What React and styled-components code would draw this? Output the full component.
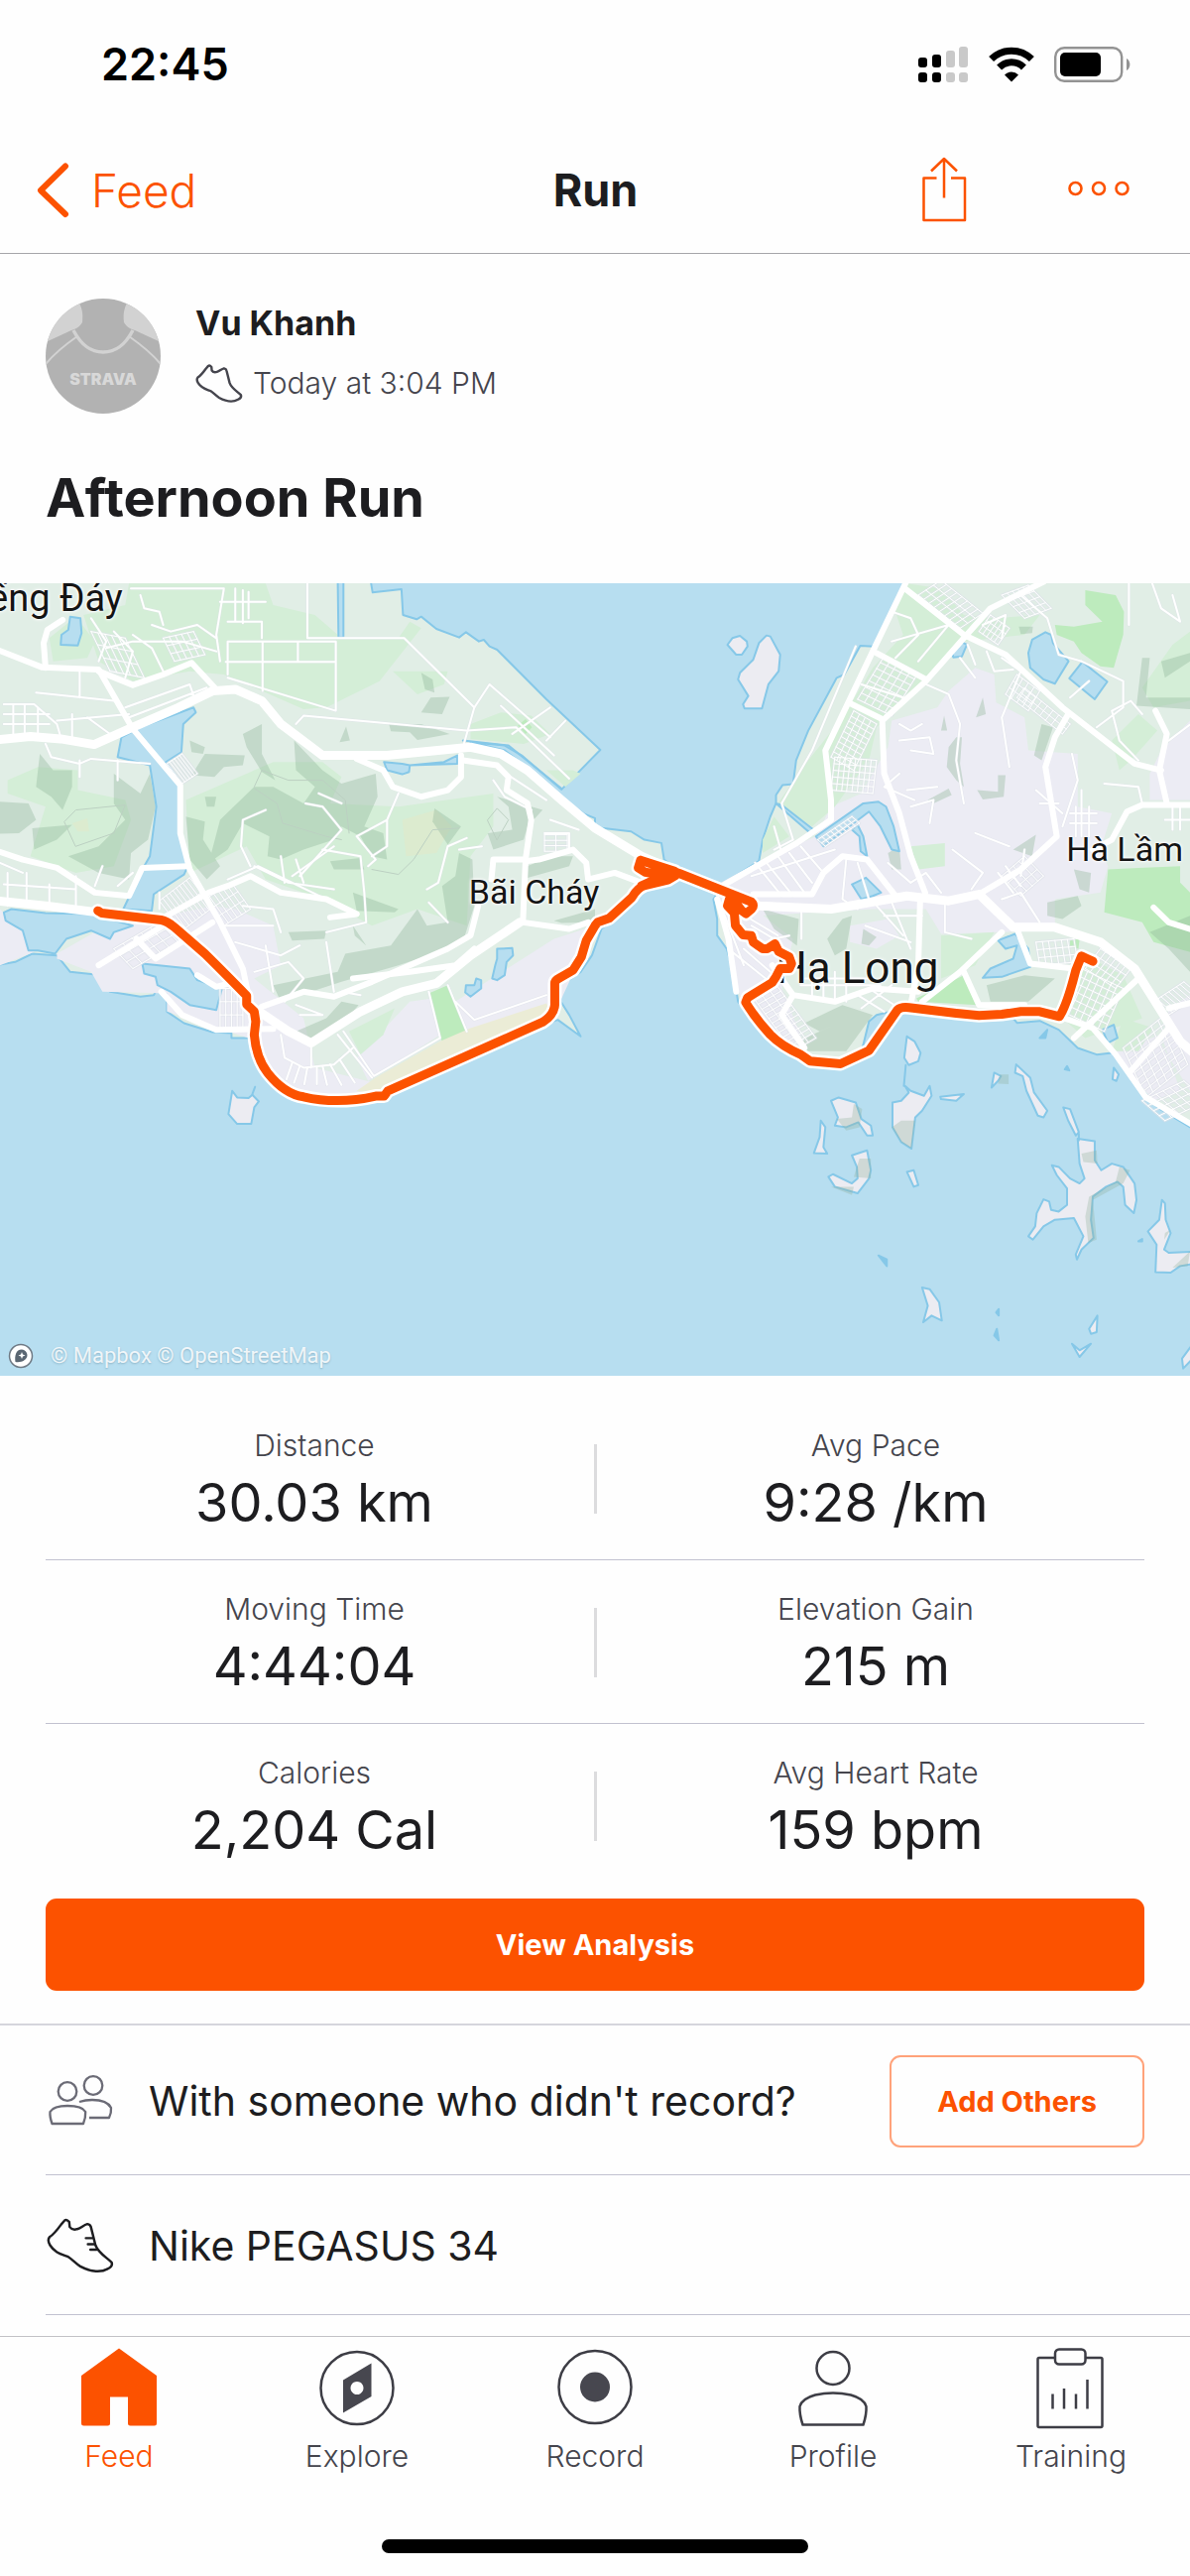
import React from "react";
import styled, { createGlobalStyle } from "styled-components";

const ORANGE = "#fc5200";
const INK = "#1d1d20";
const SLATE = "#45454d";
const RULE = "#c2c2d0";

const GlobalStyle = createGlobalStyle`
  *, *::before, *::after { box-sizing: border-box; }
  body {
    margin: 0;
    background: #fefefe;
    color: ${INK};
    font-family: Inter, "Liberation Sans", sans-serif;
  }
  h1, h2, p, dl, dt, dd, ul { margin: 0; padding: 0; }
  button { font-family: inherit; cursor: pointer; }
  a { color: inherit; text-decoration: none; }
  svg { display: block; }
`;

/* ---------- Status bar ---------- */

const StatusBar = styled.div`
  display: flex;
  align-items: center;
  justify-content: space-between;
  height: 130px;
  padding: 0 60px 0 102px;
`;

const Clock = styled.time`
  color: #000;
  font-size: 45px;
  font-weight: 600;
  line-height: 60px;
`;

const StatusIcons = styled.div`
  display: flex;
  align-items: center;
  gap: 20px;
`;

function Signal() {
  const bars = [
    [0, 11, "#000"],
    [14, 8, "#000"],
    [28, 4, "#c9c9c9"],
    [41, 0, "#c9c9c9"],
  ];
  return (
    <svg width="51" height="36" viewBox="0 0 51 36" aria-hidden="true">
      {bars.map(([x, y, fill]) => (
        <g key={x} fill={fill}>
          <rect x={x} y={y} width="9" height={21 - y} rx="3" />
          <rect x={x} y="26" width="9" height="10" rx="3" />
        </g>
      ))}
    </svg>
  );
}

function Wifi() {
  return (
    <svg width="46" height="36" viewBox="0 0 46 36" aria-hidden="true">
      <g fill="none" stroke="#000" strokeWidth="7">
        <path d="M2.600 12.600 A29 29 0 0 1 43.400 12.600" />
        <path d="M10.600 21 A17.500 17.500 0 0 1 35.400 21" />
      </g>
      <path d="M23 35.500 L16 28.400 A10 10 0 0 1 30 28.400 Z" fill="#000" />
    </svg>
  );
}

function Battery() {
  return (
    <svg width="77" height="36" viewBox="0 0 77 36" aria-hidden="true">
      <rect x="1.200" y="1.200" width="67" height="33.600" rx="9" fill="none" stroke="#939393" strokeWidth="2.400" />
      <rect x="6" y="6" width="41" height="24" rx="5" fill="#000" />
      <path d="M73 12 C77.500 14 77.500 22 73 24 Z" fill="#939393" />
    </svg>
  );
}

/* ---------- Navigation header ---------- */

const Header = styled.header`
  display: grid;
  grid-template-columns: 1fr auto 1fr;
  align-items: center;
  height: 126px;
  padding: 0 61px 2px 36px;
  border-bottom: 1px solid #a6a6aa;
`;

const BackLink = styled.a`
  display: flex;
  align-items: center;
  gap: 20px;
  color: ${ORANGE};
  font-size: 46px;
  font-weight: 300;
  line-height: 60px;
`;

const HeaderTitle = styled.h1`
  padding-left: 26px;
  font-size: 45px;
  font-weight: 700;
  line-height: 60px;
`;

const HeaderActions = styled.div`
  display: flex;
  align-items: center;
  justify-content: flex-end;
  gap: 102px;
`;

const IconButton = styled.button`
  padding: 0;
  border: 0;
  background: none;
`;

/* ---------- Athlete ---------- */

const Athlete = styled.section`
  display: flex;
  gap: 35px;
  padding: 45px 46px 0;
`;

const AthleteName = styled.p`
  font-size: 34px;
  font-weight: 700;
  line-height: 50px;
`;

const AthleteMeta = styled.p`
  display: flex;
  align-items: center;
  gap: 10px;
  margin-top: 10px;
  color: ${SLATE};
  font-size: 30px;
  font-weight: 300;
  line-height: 50px;
`;

const ActivityTitle = styled.h2`
  padding: 52px 46px 53px;
  font-size: 54px;
  font-weight: 700;
  line-height: 66px;
`;

function Avatar() {
  return (
    <svg width="116" height="116" viewBox="0 0 116 116" role="img" aria-label="Vu Khanh">
      <clipPath id="avatar-clip">
        <circle cx="58" cy="58" r="58" />
      </clipPath>
      <g clipPath="url(#avatar-clip)">
        <rect width="116" height="116" fill="#b2b2b2" />
        <g fill="#d2d2d2">
          <path d="M31 0 C37 8 38 15 37 24 C34 29 30 31 26 32 L0 44 V0 Z" />
          <path d="M85 0 C79 8 78 15 79 24 C82 29 86 31 90 32 L116 44 V0 Z" />
        </g>
        <g fill="none" stroke="#d2d2d2">
          <path d="M28 32 C36 47 45 54 58 54 C71 54 80 47 88 32" strokeWidth="3.500" />
          <path d="M32 38 C22 45 10 54 0 66 M84 38 C94 45 106 54 116 66" strokeWidth="2" />
        </g>
        <text x="58" y="87" textAnchor="middle" fontFamily="Inter, sans-serif" fontWeight="900" fontSize="16" fill="#d8d8d8">
          STRAVA
        </text>
      </g>
    </svg>
  );
}

const SHOE =
  "M17 6.500 L20.500 2.500 Q22.500 1 25 4 L25.500 9 Q28 12.500 33 11 C37 10 39 7 43 6 Q46 6.500 46.500 9 L51 27 C54 35 62 39 67 44 Q68.500 48 63 50.500 C57 54 47 54 36 48 C31 45 28 41 24 38.500 C18 36 11 35 6 27 Q3 22 5.500 19 C10 16 13 12 17 6.500 Z";

function Shoe({ width, height, color, stroke, laces }) {
  return (
    <svg width={width} height={height} viewBox="2 0 68 55" fill="none" stroke={color} strokeWidth={stroke} strokeLinejoin="round" strokeLinecap="round" aria-hidden="true">
      <path d={SHOE} />
      {laces && <path d="M41.500 20 H48 M43.500 26 H50 M46 31.500 H52" />}
    </svg>
  );
}

/* ---------- Map ---------- */

const MapFrame = styled.figure`
  position: relative;
  margin: 0;
  overflow: hidden;
  aspect-ratio: 1200 / 799;
  background: #b7def0;
`;

const MapLayer = styled.svg`
  position: absolute;
  inset: 0;
  width: 100%;
  height: 100%;
  path { vector-effect: non-scaling-stroke; }
`;

const PlaceLabel = styled.span`
  position: absolute;
  left: ${(p) => p.$x}%;
  top: ${(p) => p.$y}%;
  color: #141414;
  font-family: Roboto, "Noto Sans", sans-serif;
  font-size: ${(p) => p.$size}px;
  line-height: 40px;
  white-space: nowrap;
  text-shadow: 0 0 2px #fff, 0 0 3px #fff, 0 0 4px #fff;
`;

const Attribution = styled.figcaption`
  position: absolute;
  left: 8px;
  bottom: 6px;
  display: flex;
  align-items: center;
  gap: 17px;
  color: rgba(255, 255, 255, 0.85);
  font-family: Roboto, sans-serif;
  font-size: 22px;
  line-height: 28px;
  text-shadow: 0 1px 2px rgba(80, 120, 140, 0.4);
`;

const WEST =
  "M-20 0 H976 L978 25 L982 52 L1058 42 L1062 120 L1098 133 L1110 125 L1150 162 L1210 188 L1228 172 L1262 200 L1275 195 L1290 215 L1310 225 L1440 375 L1582 528 L1480 648 L1375 545 L1330 515 L1240 505 L1330 530 L1400 590 L1500 690 L1540 722 L1568 735 L1568 762 L1663 775 L1698 800 L1743 810 L1750 860 L1790 895 L1760 925 L1700 950 L1640 1020 L1585 1070 L1560 1150 L1530 1200 L1480 1240 L1478 1290 L1500 1330 L1530 1395 L1470 1345 L1430 1360 L1010 1580 L890 1595 L770 1575 L700 1500 L655 1400 L610 1400 L610 1385 L560 1382 L485 1355 L440 1320 L440 1265 L415 1250 L405 1270 L370 1275 L290 1260 L270 1210 L185 1200 L150 1150 L85 1145 L40 1170 L-20 1182 Z";

const EAST =
  "M2392 0 L2388 25 L2303 215 L2267 213 L2225 300 L2205 310 L2130 470 L2098 560 L2090 632 L2062 635 L2045 665 L2045 690 L2030 730 L2010 800 L2000 865 L1910 930 L1880 980 L1890 1040 L1890 1090 L1915 1130 L1933 1200 L1945 1290 L2000 1370 L2060 1440 L2130 1475 L2215 1485 L2265 1450 L2275 1420 L2290 1350 L2310 1330 L2340 1322 L2375 1310 L2450 1325 L2560 1342 L2670 1340 L2680 1354 L2740 1348 L2790 1375 L2840 1430 L2890 1450 L2930 1445 L2990 1530 L3050 1610 L3160 1686 V0 Z";

const URBAN = [
  "M2570 280 L2620 300 L2625 385 L2700 430 L2710 530 L2840 540 L2840 700 L2930 720 L2900 830 L2920 880 L2900 960 L2780 980 L2780 1075 L2480 1085 L2440 1010 L2300 1010 L2000 1030 L1900 930 L2010 860 L2150 790 L2190 700 L2270 660 L2340 520 L2350 440 L2470 400 L2500 350 Z",
  "M3030 600 L3060 530 L3136 440 V680 H3030 Z",
  "M1885 960 L1990 1010 L2090 1100 L2060 1250 L2120 1420 L2060 1440 L1960 1310 L1920 1150 Z",
  "M2240 1060 L2340 1040 L2370 1090 L2310 1130 L2240 1110 Z",
  "M2380 130 L2430 120 L2445 150 L2430 200 L2380 210 Z",
  "M3136 1270 L3080 1310 L3060 1420 L3136 1560 Z M2930 1440 L3060 1390 L3110 1560 L3040 1590 Z",
  "M150 1145 L250 1080 L440 1030 L560 1000 L620 1010 L720 1060 L740 1180 L670 1220 L800 1340 L830 1490 L1000 1540 L980 1580 L890 1595 L770 1575 L655 1400 L440 1320 L440 1265 L270 1260 L240 1200 L150 1160 Z",
  "M0 1010 L60 1075 L90 1140 L0 1180 Z",
  "M940 1460 L1080 1290 L1140 1280 L1160 1390 L970 1530 Z M1200 1290 L1460 1100 L1568 1060 L1460 1330 L1220 1385 Z",
];

const MEADOW = [
  "M340 25 H700 L720 90 L830 120 L900 190 L1050 190 L1080 140 L1110 160 L1000 320 L860 400 L800 405 L690 350 L590 300 L500 290 L350 320 L260 260 L220 120 L330 90 Z",
  "M130 190 L200 125 L250 200 L230 250 L140 260 Z",
  "M20 620 L100 580 L205 590 L205 650 L330 680 L345 740 L300 880 L200 900 L80 850 L120 700 L20 660 Z",
  "M490 680 L720 565 L850 565 L900 610 L870 690 L1050 700 L1300 660 L1300 760 L1240 850 L1230 1060 L1100 1010 L980 1060 L850 980 L700 920 L650 820 L500 900 Z",
  "M1035 290 L1180 290 L1170 330 L1100 360 Z",
  "M1240 450 L1320 415 L1400 425 L1450 480 L1380 510 L1240 495 Z",
  "M1440 590 L1510 590 L1530 600 L1490 640 Z",
  "M2388 25 L2480 40 L2540 120 L2620 130 L2740 120 L2700 180 L2620 190 L2540 200 L2480 260 L2400 370 L2310 460 L2290 560 L2200 700 L2140 760 L2050 690 L2130 560 L2220 430 L2300 280 L2380 180 L2360 110 Z",
  "M2010 800 L2040 730 L2080 790 L2010 840 Z",
  "M2930 500 L3000 420 L3050 470 L2980 560 L2950 590 Z",
  "M3010 340 L3090 210 L3136 170 V380 L3040 400 Z",
  "M2400 820 L2490 810 L2490 880 L2420 890 Z",
  "M2480 1090 L2620 1080 L2570 1180 L2480 1220 Z M2860 1150 L2960 1210 L3010 1340 L2860 1400 L2790 1330 Z",
  "M2960 1340 L3040 1370 L3000 1440 L2930 1440 Z",
  "M920 1380 L1040 1310 L1010 1390 L950 1450 Z",
];

const FOREST = [
  "M2860 45 L2940 60 L2962 110 L2960 180 L2935 280 L2900 275 L2850 235 L2830 200 L2785 180 L2780 150 L2830 155 L2905 140 L2860 90 Z",
  "M2920 890 L3000 885 L3110 880 L3110 930 L3136 960 V1140 L3040 1110 L3010 1050 L2910 1020 Z",
  "M2415 1280 L2540 1210 L2575 1300 L2420 1290 Z",
  "M1130 1265 L1180 1240 L1228 1380 L1165 1412 Z",
  "M1365 455 L1385 435 L1402 460 L1385 480 Z",
  "M2820 1105 L2845 1100 L2842 1130 L2820 1125 Z",
];

const SAND = [
  "M940 1560 L990 1520 L1160 1410 L1240 1370 L1440 1295 L1455 1330 L1430 1355 L1010 1575 Z",
];

const FAINT_SAND = [
  "M1060 740 L1150 710 L1190 760 L1150 840 L1070 850 Z",
  "M190 750 L230 735 L235 775 L205 775 Z",
];

const SHADE = [
  "M105 540 L140 590 L190 590 L190 640 L165 710 L135 670 L95 640 Z",
  "M0 685 L75 690 L95 740 L50 780 L0 782 Z",
  "M300 600 L370 660 L395 600 L410 700 L390 800 L345 840 L340 920 L260 900 L180 850 L260 820 L330 740 L300 690 Z",
  "M85 765 L190 755 L150 800 L90 830 Z",
  "M640 480 L690 450 L690 540 L725 620 L690 595 L650 520 Z",
  "M500 500 L540 520 L535 540 L505 535 Z",
  "M540 540 L645 545 L640 575 L590 580 L565 610 L505 605 Z",
  "M540 670 L570 670 L565 700 L545 700 Z",
  "M775 500 L850 590 L900 630 L960 610 L990 600 L995 670 L960 760 L1010 780 L1020 860 L980 850 L950 790 L900 760 L880 800 L800 830 L740 860 L705 850 L710 790 L640 750 L600 830 L550 870 L580 740 L670 640 L720 640 L800 690 L830 640 L780 590 Z",
  "M490 730 L540 745 L535 800 L580 880 L545 920 L500 860 Z",
  "M870 865 L950 855 L960 890 L880 890 Z",
  "M1110 295 L1140 315 L1145 355 L1120 345 Z M1110 415 L1135 370 L1185 368 L1165 420 Z",
  "M1145 705 L1215 760 L1180 815 L1140 745 Z",
  "M1025 450 L1110 450 L1185 480 L1100 498 L1080 475 L1030 472 Z",
  "M895 505 L912 458 L922 500 Z",
  "M930 960 L1050 1010 L1040 1020 L940 1015 Z",
  "M1210 840 L1245 860 L1250 1000 L1225 1090 L1180 1130 L1050 1180 L900 1230 L740 1290 L720 1240 L890 1200 L910 1145 L1030 1120 L1100 1010 L1125 1060 L1180 1050 L1165 940 L1200 910 Z",
  "M1310 670 L1430 710 L1390 760 L1380 800 L1300 830 L1285 780 L1350 770 L1340 700 Z",
  "M1390 880 L1450 850 L1510 850 L1500 880 L1390 915 Z M1460 1045 L1568 1010 V1050 L1480 1052 Z",
  "M760 1080 L860 1075 L855 1100 L770 1105 Z M930 1060 L965 1120 L935 1090 Z",
  "M780 1380 L860 1340 L900 1290 L945 1300 L900 1360 L820 1410 Z",
  "M2520 490 L2535 490 L2530 570 L2540 640 L2520 620 L2495 580 L2500 520 Z",
  "M2590 370 L2598 420 L2572 430 Z M2488 425 L2496 470 L2480 470 Z M2445 680 L2500 645 L2508 665 L2460 690 Z",
  "M2575 650 L2630 655 L2630 605 L2650 605 L2645 670 L2590 678 Z",
  "M2745 450 L2775 460 L2745 560 L2725 545 Z M2685 155 L2722 155 L2720 175 L2690 178 Z",
  "M3010 250 L3030 250 L3020 370 L3136 370 V405 L2995 395 Z M3060 260 L3136 235 V260 L3070 310 Z",
  "M2670 830 L2730 785 L2720 850 Z M2830 890 L2875 900 L2870 960 L2845 950 Z",
  "M2340 840 L2370 820 L2375 890 L2350 890 Z",
  "M2010 1010 L2105 1040 L2100 1120 L2040 1070 Z M2220 1040 L2245 1030 L2230 1130 L2200 1150 L2180 1100 Z",
  "M2275 1070 L2310 1095 L2290 1120 L2270 1115 Z",
  "M2760 990 L2840 970 L2850 1000 L2800 1040 L2760 1030 Z M3030 1080 L3136 1030 V1200 L3080 1130 Z",
  "M2110 1440 L2230 1440 L2300 1330 L2220 1300 L2120 1355 L2160 1380 L2200 1360 L2120 1400 Z",
  "M2600 1240 L2700 1210 L2780 1220 L2710 1290 L2610 1290 Z",
];

const WATER = [
  "M510 400 L516 415 L483 450 L478 535 L437 565 L475 625 L475 760 L495 880 L485 905 L405 965 L400 1015 L325 1010 L375 890 L395 850 L412 700 L395 575 L310 550 L320 490 L370 460 Z",
  "M10 1020 L30 1010 L120 1022 L240 1025 L350 1060 L300 1080 L290 1100 L240 1075 L175 1100 L145 1145 L100 1135 L75 1135 L60 1075 L15 1045 Z",
  "M375 1175 L500 1190 L520 1225 L585 1250 L570 1315 L500 1300 L450 1260 L415 1240 L410 1215 L380 1205 Z",
  "M185 125 L212 130 L215 175 L205 212 L160 210 L162 180 L180 165 Z",
  "M890 10 H905 V188 H892 Z",
  "M1012 565 L1060 570 L1080 575 L1170 565 L1205 545 L1205 570 L1080 575 L1078 595 L1060 602 L1020 590 Z",
  "M1310 1130 L1350 1128 L1352 1150 L1335 1170 L1330 1210 L1310 1225 L1297 1220 L1305 1180 L1310 1160 Z",
  "M1228 1240 L1250 1240 L1255 1220 L1268 1225 L1268 1250 L1240 1275 L1226 1262 Z",
  "M2755 172 L2770 180 L2775 205 L2816 260 L2780 328 L2750 315 L2715 280 L2710 235 L2720 195 Z",
  "M2852 262 L2918 322 L2885 375 L2818 312 Z",
  "M2530 200 L2548 210 L2535 245 L2512 248 L2510 235 Z",
  "M2045 690 L2060 695 L2150 775 L2140 785 Z",
  "M2275 690 L2315 685 L2335 700 L2355 760 L2370 835 L2350 830 L2320 760 L2290 715 L2170 820 L2150 790 Z",
  "M2260 755 L2275 790 L2285 850 L2268 835 L2265 790 L2245 770 Z",
  "M2245 935 L2282 915 L2322 960 L2300 970 L2270 980 Z",
  "M2630 1105 L2675 1085 L2710 1130 L2715 1185 L2640 1215 L2590 1218 L2610 1190 L2670 1160 L2680 1120 L2650 1130 Z",
  "M2905 1375 L2935 1360 L2945 1400 L2920 1415 Z",
];

const ISLANDS = [
  "M1917 210 L1930 190 L1950 183 L1968 200 L1970 215 L1955 240 L1940 240 Z",
  "M2020 182 L2030 185 L2056 240 L2052 290 L2025 330 L2008 403 L1962 403 L1958 390 L1972 365 L1945 315 L1950 295 L1985 255 L2000 205 Z",
  "M612 1560 L625 1580 L655 1582 L665 1572 L682 1592 L670 1610 L662 1660 L625 1660 L602 1630 Z",
  "M2390 1395 L2410 1410 L2426 1445 L2420 1470 L2395 1482 L2383 1460 Z",
  "M2385 1545 L2400 1560 L2435 1575 L2450 1545 L2455 1575 L2430 1620 L2412 1640 L2402 1735 L2375 1715 L2352 1670 V1595 L2375 1590 L2395 1565 Z",
  "M2190 1590 L2210 1580 L2255 1595 L2270 1645 L2295 1665 L2300 1695 L2285 1695 L2262 1655 L2230 1670 L2200 1665 L2208 1640 Z",
  "M2163 1650 L2175 1670 L2170 1730 L2180 1750 L2145 1748 L2160 1700 Z",
  "M2245 1755 L2285 1740 L2295 1800 L2290 1825 L2260 1870 L2200 1850 L2183 1820 L2195 1812 L2245 1840 L2260 1825 L2258 1790 Z",
  "M2390 1805 L2408 1800 L2420 1845 L2408 1850 Z",
  "M2478 1578 L2540 1570 L2520 1590 L2480 1585 Z",
  "M2678 1480 L2715 1520 L2725 1565 L2760 1620 L2750 1640 L2735 1635 L2705 1560 L2695 1515 L2675 1505 Z",
  "M2613 1550 L2620 1505 L2638 1515 L2630 1530 Z",
  "M2802 1610 L2820 1615 L2843 1685 L2835 1695 L2815 1650 Z",
  "M2840 1705 L2885 1712 L2885 1770 L2902 1800 L2930 1780 L2960 1790 L2990 1840 L2995 1890 L2988 1930 L2965 1905 L2960 1850 L2945 1835 L2915 1850 L2880 1880 L2875 1950 L2882 2005 L2850 2040 L2838 2070 L2835 2055 L2855 2000 L2830 1945 L2780 1950 L2750 1970 L2722 2010 L2710 2000 L2728 1970 L2732 1930 L2750 1888 L2765 1895 L2770 1920 L2790 1925 L2812 1905 L2812 1855 L2785 1815 L2772 1785 L2790 1790 L2820 1825 L2845 1840 L2858 1825 L2845 1780 Z",
  "M3062 1890 L3070 1900 L3072 1950 L3085 1990 L3068 2040 L3080 2050 L3160 2045 V2080 L3136 2085 L3110 2090 L3085 2110 L3045 2108 L3048 2025 L3025 1985 L3055 1950 Z",
  "M2430 2155 L2450 2160 L2475 2200 L2482 2255 L2455 2240 L2433 2260 L2445 2210 Z",
  "M2892 2240 L2890 2290 L2875 2295 L2870 2280 Z M2825 2325 L2845 2345 L2875 2325 L2845 2365 Z",
  "M3160 2300 L3115 2370 L3118 2400 L3160 2350 Z",
  "M2935 1490 L2948 1510 L2942 1530 L2932 1525 Z",
];

const ISLAND_SHADE = [
  "M2350 1670 L2375 1650 L2412 1650 L2402 1735 L2375 1715 Z",
  "M2205 1645 L2245 1640 L2250 1600 L2272 1615 L2265 1670 L2230 1680 Z",
  "M2265 1765 L2295 1765 L2295 1825 L2250 1820 Z M2190 1850 L2250 1850 L2245 1875 Z",
  "M2850 1750 L2890 1740 L2892 1780 L2855 1775 Z",
  "M2870 1880 L2860 1940 L2868 2020 L2890 2010 L2880 1890 L2960 1840 L2978 1800 L2950 1790 L2940 1835 Z",
  "M3070 1990 L3085 1980 L3068 2010 Z M3090 2095 L3136 2045 L3130 2090 Z",
  "M2635 1510 L2658 1510 V1540 L2630 1538 Z",
];

const ISLETS = [
  "M2315 2058 L2337 2070 V2090 Z",
  "M2625 2230 L2632 2220 V2240 Z M2620 2300 L2627 2280 L2632 2315 Z",
  "M2740 1400 L2760 1375 L2755 1400 Z M2806 1495 L2812 1485 L2818 1498 Z M3000 2015 L3010 2008 V2015 Z",
];

const MOTORWAYS = [
  "M-10 498 L80 488 L160 495 L248 512 L340 465 L470 400 L560 350 L620 345 L690 380 L740 450 L850 545 L1020 545 L1240 520 L1320 540 L1390 590 L1480 680 L1568 765 L1690 850 L1790 900 L1900 960 L2000 1000 L2190 1010 L2390 970 L2500 985 L2580 965 L2670 1065 L2780 1065 L2900 1110 L2990 1190 L3050 1300 L3110 1410 L3150 1450",
  "M-10 985 L120 1000 L260 1020",
  "M670 1310 L760 1380 L820 1415 L950 1320 L1060 1260 L1150 1235 L1240 1150 L1370 1050",
];

const MAJOR_ROADS = [
  "M-10 224 L110 278 L260 285 L350 465 L475 635 L475 780 L500 890 L545 980 L580 1050 L640 1190 L660 1300",
  "M165 135 L125 165 L115 205 L120 280",
  "M260 290 L350 332 L430 300 L505 265 L570 345",
  "M-10 833 L60 860 L150 885 L250 960 L340 970 L375 885 L495 880",
  "M440 1030 L550 960 L600 940 L660 910 L740 960 L860 980 L940 1025 L870 1035",
  "M940 555 L1010 590 L1035 640 L1110 670 L1180 650 L1215 610 L1215 545",
  "M1220 560 L1310 575 L1340 610 L1335 650 L1390 690 L1400 740 L1385 860 L1300 860 L1295 920",
  "M1385 865 L1420 860 L1510 830 L1545 870 L1550 920 L1620 900 L1690 930",
  "M1385 860 L1378 1050 L1500 1070 L1550 1050",
  "M1260 1000 L1240 1090 L1180 1130 L980 1230 L880 1275 L800 1260 L690 1305",
  "M930 1220 L1080 1200 L1200 1180 L1250 1130",
  "M260 1180 L430 1060 M360 1100 L410 1160 L560 1050",
  "M425 1260 L480 1330 L570 1375 L720 1372",
  "M520 1210 L570 1245 L620 1230",
  "M2388 20 L2300 230 L2175 530 L2190 680 L2190 740 L2100 810 L1910 935",
  "M2385 40 L2540 180 L2650 240 L2800 400 L2990 570 L3060 590",
  "M2750 20 L2610 100 L2540 190 L2440 320 L2325 440 L2330 600 L2370 720 L2400 850 L2438 960",
  "M2310 235 L2440 315 M2245 390 L2325 435",
  "M2815 420 L2780 490 L2755 580 L2785 790 L2690 890 L2580 965",
  "M3045 410 L3075 480 L3055 590 L3075 690",
  "M3150 695 H3010 L2970 715 L2930 800 L2880 830",
  "M1985 965 L2140 965 L2170 900 L2220 850 L2285 860 L2360 970",
  "M2425 975 L2420 1180 L2400 1300",
  "M2640 1080 L2530 1200 L2430 1290 M2680 1070 L2715 1175 L2830 1190",
  "M1890 980 L1920 1100 L1940 1260",
  "M2035 1180 L2090 1270 L2060 1330 L2120 1430 M2090 1270 L2200 1290 L2300 1250 L2420 1260",
  "M2540 1200 L2580 1300 L2700 1300",
  "M2830 1400 L3000 1220 M2780 1330 L2880 1370 L2940 1450 L3020 1580 L3150 1668 M2980 1500 L3080 1370",
  "M3040 1005 L3080 1050 L3150 1075",
  "M3080 1310 L3150 1290",
];

const MINOR_ROADS = [
  "M345 40 H590 L570 180 L580 260 M370 60 L380 100 L420 110 L430 150 M240 130 L280 200 L260 260 M300 170 L350 230 L330 310 M400 150 L450 170 L520 150 L570 190 M350 180 L400 220 L430 290 M280 220 L350 200 L480 200 L570 230",
  "M600 200 H885 M595 262 H885 M692 200 V350 M785 200 V262 M885 200 V410 L600 310 M600 200 V300 M810 20 V190 H1065 L1250 400 L1220 520",
  "M580 80 H700 M620 40 V140 M640 45 V145 M655 50 V130 M600 140 H690 V190",
  "M95 355 L300 380 M210 290 V370 M330 400 L500 330 L515 380 M340 430 L545 340 M150 440 L340 420 M190 420 V500 M10 390 H90 L150 450 L160 490 M10 420 H130 M10 450 H130 M35 390 V485 M65 390 V485 M100 400 V485 M230 430 L290 480",
  "M800 425 L1230 470 L1360 460 M780 450 L800 425 M1250 400 L1290 330 L1450 490 M1360 460 L1500 615 M1450 400 L1350 480 M1490 440 L1440 500 M1320 395 L1460 545",
  "M120 510 L135 550 L210 570 L240 555 L395 570 M210 560 V610 M310 560 V620",
  "M700 710 L640 740 L635 820 L660 880 M805 690 L850 700 L900 770 L790 910 M840 660 L900 690 M1050 660 L1020 740 L940 790 L990 860 L970 880 M1020 740 V820 L980 850",
  "M670 880 L760 930 L880 950 M600 920 L680 880 L860 980 M740 850 L750 930 M780 860 L800 930 M850 830 L950 850 L960 960 L965 1050 L860 1080 M770 910 L880 820",
  "M1125 950 L1155 930 L1180 820 L1230 795 M1210 830 L1270 820 M1300 620 L1330 670 L1400 710 M1320 590 L1440 680 M1435 780 H1500 V830 M1450 740 L1525 770",
  "M0 870 L60 900 M10 935 L200 950 M20 900 V1000 M70 900 V1000 M130 935 V1000 M200 910 V1015 M270 880 L250 940 M310 940 L350 900",
  "M420 960 V1010 M740 1080 L720 1010 L640 1000 M590 1060 H720 M620 1110 L740 1150 L790 1120 M670 1200 L760 1170 L800 1220 L750 1290 M700 1120 L720 1260 M860 1110 L880 1260 M1180 1050 L1130 990",
  "M780 1300 L850 1330 L790 1330 M900 1260 L950 1270 M820 1420 V1490 M740 1390 L750 1460 L800 1490 L880 1480 L930 1430 M890 1390 L980 1520 M905 1380 L985 1515 L1160 1400 L1130 1260 M1200 1290 L1250 1345 L1440 1270 M1180 1240 L1230 1380",
  "M770 1475 L755 1525 M790 1485 L775 1535 M810 1490 L802 1540 M835 1490 V1540 M850 1485 L862 1542 M870 1480 L900 1542 M895 1465 L935 1535",
  "M2255 215 L2140 530 L2060 690 L2090 800 L2040 830 M2350 110 L2400 130 L2420 180 L2360 250 M2350 200 L2500 150 L2420 260 M2270 330 L2380 370",
  "M2440 330 L2500 360 L2530 450 L2520 560 L2540 690 M2370 450 L2400 470 L2430 450 M2370 500 L2450 490 L2460 540 L2400 530 M2640 250 L2690 290 L2640 430 L2660 580 M2390 650 L2470 640 M2400 700 L2460 680 L2450 750 M2370 600 L2330 640 L2410 680",
  "M2690 60 L2760 130 L2790 240 L2850 260 M2550 210 L2570 270 M2600 230 L2620 290 L2670 285 M2530 250 L2570 310 M2590 150 L2650 120 L2640 190",
  "M2975 20 V150 M3035 20 L3060 100 L3110 140 L3090 60 M2930 410 L2950 500 L3000 560 M2930 410 L2980 380 L3010 420 M2850 260 L2960 320 V400 L2890 460 M2820 370 L2870 320",
  "M2850 650 V790 M2730 650 L2800 720 M2740 690 H2790 M2700 830 L2690 910 M2650 880 L2690 940 M2630 900 L2670 960 M2570 780 L2660 820 M2510 830 L2590 900 L2560 950 M2825 540 L2840 620 L2800 760",
  "M2910 630 L3000 640 L3010 690 M3150 440 L3080 500 M2820 720 H2890 M2820 750 H2890 M2835 700 V790 M2870 700 V790 M3070 740 H3150 M3090 700 V770 M3110 700 V770",
  "M1990 870 L2060 970 M2020 870 L2090 970 M2050 850 L2120 960 M2080 840 L2140 930 M2110 820 L2170 900 M2040 760 L2060 840 M1980 910 L2200 830",
  "M2230 860 L2220 980 L2260 1010 M2260 870 L2290 980 M2340 870 L2400 930 L2440 900 L2480 960 M2310 1000 L2380 1090 M2350 990 L2400 1130 M2330 1030 H2430 M2280 1060 L2400 1110 M2490 990 V1080 L2560 1100 M2640 980 L2690 960 L2740 1050",
  "M1900 1000 L1960 1180 M1920 1000 L2050 1090 M1930 1140 L2040 1240 M1960 1130 L2060 1230 M1980 1060 L2040 1100 L2080 1090 M2112 1010 V1100",
  "M2120 1220 H2300 M2110 1240 H2320 M2140 1190 V1280 M2170 1190 V1290 M2200 1200 V1290 M2230 1200 V1290 M2260 1270 L2330 1320 M2290 1250 L2370 1310 M2350 1240 L2270 1310",
];

// Parallel streets filling a quarter: origin, two spanning vectors, and a count along each.
function streetGrid([x, y, ax, ay, bx, by, across, along]) {
  const parts = [];
  for (let i = 0; i <= across; i += 1) {
    const t = i / across;
    parts.push(`M${Math.round(x + ax * t)} ${Math.round(y + ay * t)} l${bx} ${by}`);
  }
  for (let j = 0; j <= along; j += 1) {
    const t = j / along;
    parts.push(`M${Math.round(x + bx * t)} ${Math.round(y + by * t)} l${ax} ${ay}`);
  }
  return parts.join(" ");
}

const STREET_GRIDS = [
  [2420, 60, 110, 100, 60, -45, 8, 3],
  [2640, 60, 70, -30, 60, 70, 5, 4],
  [2330, 245, 90, 50, -70, 130, 5, 7],
  [2250, 410, 60, 40, -60, 140, 4, 9],
  [2200, 550, 110, 10, -10, 100, 8, 5],
  [2680, 300, 60, 50, -30, 60, 4, 3],
  [2700, 340, 120, 110, -20, 30, 8, 2],
  [2580, 170, 50, 40, 30, -50, 5, 3],
  [2700, 850, 50, 60, -60, 60, 3, 4],
  [2730, 1110, 100, -10, 10, 70, 6, 3],
  [2850, 1190, 110, 60, -50, 130, 7, 6],
  [2900, 1130, 80, 60, -40, 60, 6, 3],
  [2960, 1430, 110, -100, 60, 150, 6, 8],
  [3040, 1290, 80, -60, 40, 40, 8, 1],
  [3010, 1590, 110, -60, 60, 60, 6, 4],
  [1980, 1270, 60, -40, 110, 170, 3, 12],
  [420, 985, 80, -70, 60, 90, 9, 2],
  [540, 980, 70, -50, 50, 80, 6, 3],
  [300, 1130, 120, -80, 50, 60, 5, 3],
  [580, 1250, 60, 0, 0, 120, 4, 3],
  [440, 570, 40, -30, 40, 60, 6, 1],
  [2155, 800, 90, -70, 20, 20, 8, 2],
  [1435, 785, 60, 0, 0, 50, 2, 3],
  [240, 170, 90, 20, 50, 120, 5, 3],
  [430, 190, 80, -20, 30, 70, 5, 3],
].map(streetGrid);

const ROUTE =
  "M258 1015 L268 1022 L425 1043 Q440 1046 460 1065 L540 1145 Q580 1190 650 1272 L650 1298 L670 1320 L674 1350 L670 1390 Q675 1460 705 1505 Q750 1570 800 1578 Q890 1602 990 1576 H1012 L1022 1560 L1430 1352 Q1460 1330 1462 1300 V1235 Q1462 1225 1475 1218 L1510 1195 L1532 1155 L1545 1105 L1568 1060 L1575 1050 L1605 1038 L1665 975 Q1680 945 1700 938 L1760 922 L1780 908 L1778 895 L1688 862 L1682 885 L1700 898 L1750 908 L1690 940 M1688 862 L1790 902 L1980 988 Q1990 998 1980 1010 L1966 1024 L1955 1015 L1935 985 L1922 980 L1917 1000 L1935 1022 L1938 1060 L1958 1088 L1980 1090 L1985 1110 L2010 1130 L2022 1130 L2042 1115 L2052 1138 L2080 1155 L2086 1175 L2080 1190 L2056 1190 L2045 1215 L2035 1232 L1970 1278 L1965 1292 Q1990 1340 2030 1390 Q2060 1425 2110 1450 L2135 1470 L2215 1478 L2290 1438 L2365 1315 Q2375 1305 2395 1308 L2520 1325 L2580 1332 L2640 1328 L2690 1320 L2740 1320 L2792 1335 Q2812 1300 2835 1195 L2850 1152 L2865 1160 L2880 1168";

function Area({ paths, fill, stroke, opacity }) {
  return (
    <g fill={fill} stroke={stroke || "none"} strokeWidth="2" strokeLinejoin="round" opacity={opacity}>
      {paths.map((d, i) => (
        <path key={i} d={d} />
      ))}
    </g>
  );
}

function Roads({ paths, width, color, opacity }) {
  return (
    <g fill="none" stroke={color || "#fff"} strokeWidth={width} strokeLinejoin="round" strokeLinecap="round" opacity={opacity}>
      {paths.map((d, i) => (
        <path key={i} d={d} />
      ))}
    </g>
  );
}

const MAP_VIEW = { viewBox: "0 24 3136 2398", preserveAspectRatio: "none" };

function RouteMap() {
  return (
    <MapFrame>
      <MapLayer {...MAP_VIEW} role="img" aria-label="Map of the run around Hạ Long">
        <Area paths={[WEST, EAST]} fill="#e1eee6" stroke="#86c8e8" />
        <Area paths={URBAN} fill="#ececf4" />
        <Area paths={MEADOW} fill="#d4eed7" />
        <Area paths={FOREST} fill="#bdebbd" />
        <Area paths={SAND} fill="#ebecd6" />
        <Area paths={FAINT_SAND} fill="#dcebcf" />
        <Area paths={SHADE} fill="#8fb599" opacity="0.36" />
        <Roads
          paths={[
            "M170 745 L200 710 L330 695 L300 780 L200 820 Z",
            "M670 640 L690 590 L760 620 L850 620 L910 680 L920 780",
            "M670 645 L730 690 L745 750 L860 790 L900 800",
            "M980 890 L1050 905 L1090 860 L1140 770 L1210 765",
            "M1285 740 L1310 705 L1340 740 L1310 800 Z",
          ]}
          width="1"
          color="#bcd0c2"
        />
        <Area paths={WATER} fill="#b7def0" stroke="#86c8e8" />
        <Area paths={ISLANDS} fill="#ececf2" stroke="#86c8e8" />
        <Area paths={ISLAND_SHADE} fill="#8fae99" opacity="0.3" />
        <Area paths={ISLETS} fill="#86c8e8" stroke="#86c8e8" />
        <Roads paths={["M2387 1482 L2382 1545", "M2843 1690 V1710", "M665 1570 L672 1548", "M1220 500 L1340 515 L1480 645"]} width="2" color="#86c8e8" />
        <Roads paths={[...STREET_GRIDS, ...MINOR_ROADS]} width="3" color="#dfe3ea" opacity="0.6" />
        <Roads paths={STREET_GRIDS} width="1" />
        <Roads paths={MINOR_ROADS} width="2" />
        <Roads paths={MAJOR_ROADS} width="6" />
        <Roads paths={MOTORWAYS} width="9" />
      </MapLayer>
      <PlaceLabel $x={-1} $y={-0.6} $size={38}>ếng Đáy</PlaceLabel>
      <PlaceLabel $x={39.4} $y={36.4} $size={34}>Bãi Cháy</PlaceLabel>
      <PlaceLabel $x={89.6} $y={31.1} $size={34}>Hà Lầm</PlaceLabel>
      <PlaceLabel $x={65.2} $y={46} $size={44}>Hạ Long</PlaceLabel>
      <MapLayer {...MAP_VIEW} aria-hidden="true">
        <Roads paths={[ROUTE]} width="14" />
        <Roads paths={[ROUTE]} width="9" color={ORANGE} />
      </MapLayer>
      <Attribution>
        <svg width="26" height="26" viewBox="0 0 26 26" aria-hidden="true">
          <circle cx="13" cy="13" r="11.500" fill="#fff" stroke="#6f7a85" strokeWidth="1.500" />
          <path d="M7.500 19 C6.500 13 8 6.500 14 6.500 A5.800 5.800 0 0 1 19.500 12 C19.500 17.500 13 20 7.500 19 Z" fill="#5a6672" />
          <path d="M14 9 L15 11.500 L17.500 12.500 L15 13.500 L14 16 L13 13.500 L10.500 12.500 L13 11.500 Z" fill="#fff" />
        </svg>
        <span>© Mapbox © OpenStreetMap</span>
      </Attribution>
    </MapFrame>
  );
}

/* ---------- Stats ---------- */

const Stats = styled.section`
  padding: 21px 46px 0;
`;

const StatRow = styled.dl`
  display: grid;
  grid-template-columns: 1fr 24px 1fr;
  padding: 29px 0 27px;
  & + & { border-top: 1px solid ${RULE}; }
`;

const Stat = styled.div`
  display: flex;
  flex-direction: column;
  align-items: center;
  gap: 8px;
`;

const StatLabel = styled.dt`
  color: ${SLATE};
  font-size: 30px;
  font-weight: 300;
  line-height: 40px;
`;

const StatValue = styled.dd`
  font-size: 54px;
  font-weight: 400;
  line-height: 60px;
`;

const StatDivider = styled.div`
  width: 3px;
  height: 70px;
  margin: auto;
  background: #dcdcde;
`;

const AnalysisButton = styled.button`
  display: block;
  width: 100%;
  margin-top: 12px;
  padding: 26px;
  border: 0;
  border-radius: 11px;
  background: ${ORANGE};
  color: #fff;
  font-size: 29px;
  font-weight: 700;
  line-height: 41px;
`;

const STATS = [
  [["Distance", "30.03 km"], ["Avg Pace", "9:28 /km"]],
  [["Moving Time", "4:44:04"], ["Elevation Gain", "215 m"]],
  [["Calories", "2,204 Cal"], ["Avg Heart Rate", "159 bpm"]],
];

/* ---------- Details list ---------- */

const Details = styled.ul`
  margin-top: 33px;
  padding: 0 0 21px 46px;
  border-top: 2px solid #d5d5dc;
  list-style: none;
`;

const DetailRow = styled.li`
  display: flex;
  align-items: center;
  gap: 34px;
  height: ${(p) => p.$height}px;
  padding: 2px 46px 0 0;
  border-bottom: 1px solid ${RULE};
  font-size: 41px;
  font-weight: 400;
  line-height: 52px;
`;

const DetailText = styled.span`
  flex: 1;
`;

const AddButton = styled.button`
  padding: 24px 46px;
  border: 2px solid #ffa27a;
  border-radius: 11px;
  background: none;
  color: ${ORANGE};
  font-size: 29px;
  font-weight: 700;
  line-height: 41px;
`;

function People() {
  return (
    <svg width="70" height="52" viewBox="0 0 70 52" fill="none" stroke="#6b6b76" strokeWidth="2.300" strokeLinejoin="round" aria-hidden="true">
      <circle cx="22" cy="16.500" r="9.300" />
      <circle cx="48" cy="10.500" r="9.300" />
      <path d="M6.500 49 Q4 42 4.500 37 Q8 31 22 31 Q37 31 40.200 37 Q40.500 43 38 49 Z" />
      <path d="M34 27 Q40 25 47 25 Q62 25 66 33 Q66.500 38 64 43 H44" />
    </svg>
  );
}

/* ---------- Tab bar ---------- */

const TabBar = styled.nav`
  display: grid;
  grid-template-columns: repeat(5, 1fr);
  padding-top: 11px;
  border-top: 1px solid #c2c2c6;
`;

const Tab = styled.a`
  display: flex;
  flex-direction: column;
  align-items: center;
  gap: 7px;
  color: ${(p) => (p.$active ? ORANGE : SLATE)};
  font-size: 30px;
  font-weight: 300;
  line-height: 40px;
`;

const HomeIndicator = styled.div`
  width: 430px;
  height: 14px;
  margin: 64px auto 23px;
  border-radius: 7px;
  background: #000;
`;

const TAB_ICONS = {
  Feed: (
    <path
      d="M38 .5 L76 28 V76 Q76 78.500 73.500 78.500 H49.500 Q47 78.500 47 76 V49.500 H29 V76 Q29 78.500 26.500 78.500 H2.500 Q0 78.500 0 76 V28 Z"
      fill={ORANGE}
      stroke="none"
    />
  ),
  Explore: (
    <>
      <circle cx="38" cy="40.500" r="36.500" />
      <path
        d="M24 32.500 L52.500 15.500 V49 L24 65.500 Z M38 34 a6.500 6.500 0 1 0 .01 0 Z"
        fill="#47474f"
        fillRule="evenodd"
        stroke="none"
      />
    </>
  ),
  Record: (
    <>
      <circle cx="38" cy="39.500" r="36.500" />
      <circle cx="38" cy="39.500" r="15" fill="#47474f" stroke="none" />
    </>
  ),
  Profile: (
    <>
      <circle cx="38" cy="20.500" r="16.500" />
      <path d="M7.500 77.500 Q4 67 4.500 59 Q7 51 20 47.500 Q38 43.500 56 47.500 Q69 51 71.500 59 Q72 67 68.500 77.500 Z" />
    </>
  ),
  Training: (
    <>
      <path d="M22 10 H6 Q4.500 10 4.500 11.500 V78.500 Q4.500 80 6 80 H68 Q69.500 80 69.500 78.500 V11.500 Q69.500 10 68 10 H53" />
      <rect x="22" y="1.500" width="30.500" height="15" rx="4" />
      <path d="M19.500 46.500 V61.500 M31 41 V61.500 M43 46.500 V61.500 M54.500 32 V61.500" />
    </>
  ),
};

export default function App() {
  return (
    <>
      <GlobalStyle />
      <StatusBar>
        <Clock>22:45</Clock>
        <StatusIcons>
          <Signal />
          <Wifi />
          <Battery />
        </StatusIcons>
      </StatusBar>

      <Header>
        <BackLink href="#feed">
          <svg width="36" height="56" viewBox="0 0 36 56" fill="none" stroke={ORANGE} strokeWidth="6" strokeLinecap="round" strokeLinejoin="round" aria-hidden="true">
            <path d="M30 3.500 L5 28 L30 52" />
          </svg>
          Feed
        </BackLink>
        <HeaderTitle>Run</HeaderTitle>
        <HeaderActions>
          <IconButton type="button" aria-label="Share">
            <svg width="46" height="72" viewBox="0 0 46 72" fill="none" stroke={ORANGE} strokeWidth="2.500" strokeLinejoin="round">
              <path d="M15.500 23.500 H2.500 V66 H44 V23.500 H30" />
              <path d="M23 43.500 V4 M10 16.500 L23 4 L36 16.500" />
            </svg>
          </IconButton>
          <IconButton type="button" aria-label="More options">
            <svg width="62" height="22" viewBox="0 0 62 22" fill="none" stroke={ORANGE} strokeWidth="2.600">
              <circle cx="7.500" cy="9" r="6" />
              <circle cx="31" cy="9" r="6" />
              <circle cx="54.500" cy="9" r="6" />
            </svg>
          </IconButton>
        </HeaderActions>
      </Header>

      <main>
        <Athlete>
          <Avatar />
          <div>
            <AthleteName>Vu Khanh</AthleteName>
            <AthleteMeta>
              <Shoe width={48} height={39} color={SLATE} stroke={3.4} />
              Today at 3:04 PM
            </AthleteMeta>
          </div>
        </Athlete>
        <ActivityTitle>Afternoon Run</ActivityTitle>

        <RouteMap />

        <Stats>
          {STATS.map(([left, right]) => (
            <StatRow key={left[0]}>
              <Stat>
                <StatLabel>{left[0]}</StatLabel>
                <StatValue>{left[1]}</StatValue>
              </Stat>
              <StatDivider />
              <Stat>
                <StatLabel>{right[0]}</StatLabel>
                <StatValue>{right[1]}</StatValue>
              </Stat>
            </StatRow>
          ))}
          <AnalysisButton type="button">View Analysis</AnalysisButton>
        </Stats>

        <Details>
          <DetailRow $height={151}>
            <People />
            <DetailText>With someone who didn't record?</DetailText>
            <AddButton type="button">Add Others</AddButton>
          </DetailRow>
          <DetailRow $height={141}>
            <Shoe width={70} height={56} color={INK} stroke={2.4} laces />
            <DetailText>Nike PEGASUS 34</DetailText>
          </DetailRow>
        </Details>
      </main>

      <TabBar>
        {Object.entries(TAB_ICONS).map(([name, icon]) => (
          <Tab key={name} href={`#${name.toLowerCase()}`} $active={name === "Feed"}>
            <svg width="76" height="82" viewBox="0 0 76 82" fill="none" stroke="#3d3d45" strokeWidth="2.500" strokeLinejoin="round" aria-hidden="true">
              {icon}
            </svg>
            {name}
          </Tab>
        ))}
      </TabBar>
      <HomeIndicator />
    </>
  );
}
